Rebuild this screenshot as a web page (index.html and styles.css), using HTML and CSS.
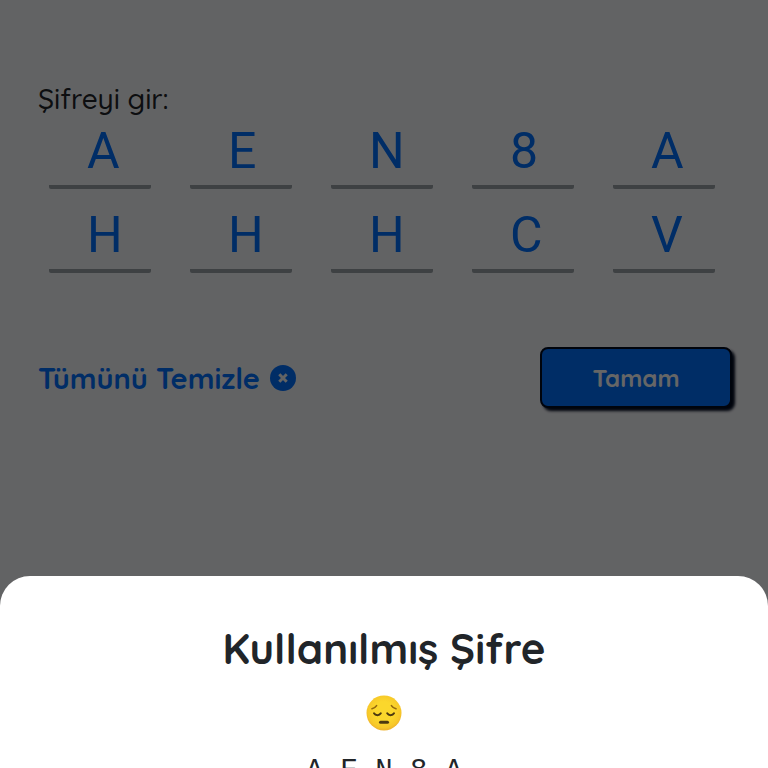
FILE: index.html
```html
<!DOCTYPE html>
<html lang="tr">
<head>
<meta charset="utf-8">
<meta name="viewport" content="width=device-width, initial-scale=1">
<title>Şifre</title>
<link rel="stylesheet" href="styles.css">
</head>
<body>
<main class="page">
  <form class="code-form">
    <fieldset class="code-fields">
      <legend class="code-label">Şifreyi gir:</legend>
      <div class="code-grid">
        <input class="code-input" aria-label="1" maxlength="1" value="A">
        <input class="code-input" aria-label="2" maxlength="1" value="E">
        <input class="code-input" aria-label="3" maxlength="1" value="N">
        <input class="code-input" aria-label="4" maxlength="1" value="8">
        <input class="code-input" aria-label="5" maxlength="1" value="A">
        <input class="code-input" aria-label="6" maxlength="1" value="H">
        <input class="code-input" aria-label="7" maxlength="1" value="H">
        <input class="code-input" aria-label="8" maxlength="1" value="H">
        <input class="code-input" aria-label="9" maxlength="1" value="C">
        <input class="code-input" aria-label="10" maxlength="1" value="V">
      </div>
    </fieldset>
    <div class="actions">
      <button class="clear" type="reset">Tümünü Temizle
        <svg class="clear-icon" viewBox="0 0 26 26" aria-hidden="true"><circle cx="13" cy="13" r="13"/><path d="M9.300 9.300l7.400 7.400M16.700 9.300l-7.400 7.400"/></svg>
      </button>
      <button class="submit" type="button">Tamam</button>
    </div>
  </form>
</main>
<div class="backdrop">
  <section class="sheet" role="dialog" aria-labelledby="sheet-title">
    <h1 class="sheet-title" id="sheet-title">Kullanılmış Şifre</h1>
    <svg class="sheet-face" viewBox="0 0 36 36" aria-hidden="true">
      <defs><radialGradient id="skin" cx=".5" cy=".45" r=".55"><stop offset=".5" stop-color="#fbd72c"/><stop offset=".85" stop-color="#f7c829"/><stop offset="1" stop-color="#eeb12b"/></radialGradient></defs>
      <circle cx="18" cy="18" r="17.500" fill="url(#skin)"/>
      <g fill="none" stroke-linecap="round">
        <path d="M6 13.800c2-.500 3.500-1.500 4.600-3.200M30 13.800c-2-.500-3.500-1.500-4.600-3.200" stroke="#94680f" stroke-width="1.600"/>
        <path d="M8 18.300c1.500 2.500 5.300 2.500 6.800 0M21.200 18.300c1.500 2.500 5.300 2.500 6.800 0" stroke="#4d3910" stroke-width="2"/>
        <path d="M14.500 27.200h7" stroke="#4d3910" stroke-width="3"/>
      </g>
    </svg>
    <p class="sheet-code">A E N 8 A</p>
  </section>
</div>
</body>
</html>
```
FILE: styles.css
```css
* { box-sizing: border-box; }

body {
  margin: 0;
  min-height: 100vh;
  overflow: hidden;
  background: #f6f7fb;
  color: #212529;
  font-family: Quicksand, Lato, sans-serif;
}

button { border: 0; background: none; padding: 0; font-family: inherit; cursor: pointer; }

.page { padding: 79px 36px 0 38px; }

.code-fields { min-width: 0; margin: 0; padding: 0; border: 0; }

.code-label { padding: 0; font-size: 28px; line-height: 40px; font-weight: 500; }

.code-grid {
  display: grid;
  grid-template-columns: repeat(5, 1fr);
  gap: 14px 39px;
  padding: 0 17px 0 11px;
}

.code-input {
  width: 100%;
  height: 70px;
  padding: 0 0 3px 38px;
  border: 0;
  border-bottom: 4px solid #9ba2a7;
  border-radius: 2px;
  background: transparent;
  color: #0070ff;
  font: 400 50px/62px Roboto, sans-serif;
}

.actions {
  display: flex;
  align-items: center;
  justify-content: space-between;
  margin-top: 74px;
}

.clear {
  display: flex;
  align-items: center;
  gap: 10px;
  color: #0070ff;
  font-size: 29px;
  font-weight: 700;
}

.clear-icon { width: 26px; height: 26px; fill: #0070ff; }

.clear-icon path { stroke: #f8f9fa; stroke-width: 3; }

.submit {
  width: 192px;
  height: 61px;
  border: 2px solid #000a20;
  border-radius: 8px;
  background: #0070ff;
  box-shadow: 3px 3px 3px #000a20;
  color: #fff;
  font-size: 24px;
  font-weight: 700;
}

.backdrop {
  position: fixed;
  inset: 0;
  padding-top: 75vh;
  background: rgba(0, 0, 0, 0.6);
}

.sheet {
  display: flex;
  flex-direction: column;
  align-items: center;
  height: 100%;
  overflow: hidden;
  padding-top: 48px;
  border-radius: 30px 30px 0 0;
  background: #fff;
}

.sheet-title { margin: 0; font-size: 42px; line-height: 50px; font-weight: 700; }

.sheet-face { flex: none; width: 36px; height: 36px; margin-top: 21px; }

.sheet-code { margin: 21px 0 0; font: 400 29px/40px "Liberation Mono", monospace; }
```
